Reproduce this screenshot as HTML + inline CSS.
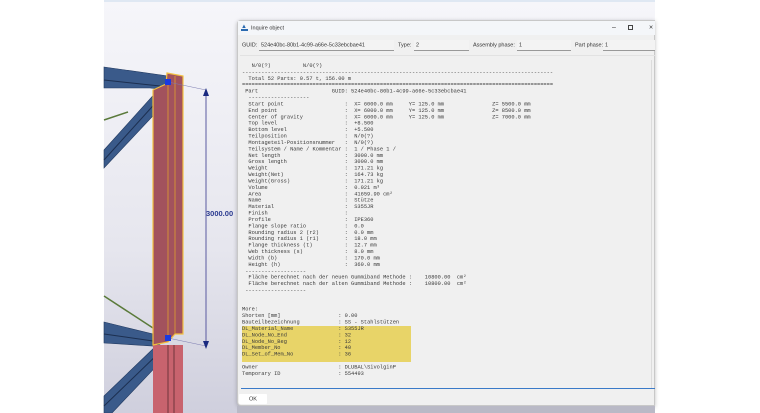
<!DOCTYPE html>
<html><head><meta charset="utf-8"><style>
*{margin:0;padding:0;box-sizing:border-box}
body{width:760px;height:413px;overflow:hidden;background:#fff;position:relative;font-family:"Liberation Sans",sans-serif}
.abs{position:absolute}
#txt{position:absolute;left:242px;top:63px;transform:scale(0.5);transform-origin:0 0;font-family:"Liberation Mono",monospace;font-size:10.7px;line-height:12.84px;color:#3a3a3a}
#txt div{position:relative;height:12.84px;width:860px}
#txt span{position:absolute;white-space:pre;top:0}
.s{transform:scale(0.5);transform-origin:0 0;white-space:nowrap;font-size:11px;color:#333}
</style></head><body>
<div class="abs" style="left:104px;top:0;width:551px;height:413px;background:linear-gradient(#f6f6fa,#e6e6ee 60%,#cfcfdd)"></div>
<div class="abs" style="left:104px;top:0;width:551px;height:2px;background:#dfe8f3"></div>
<svg class="abs" style="left:0;top:0" width="240" height="413">
<g fill="#3a5a8a" stroke="#223a60" stroke-width="0.6">
<polygon points="104,67 168,76 168,90 150,88 104,88"/>
<line x1="104" y1="80" x2="160" y2="86" stroke="#1c2f50" stroke-width="1"/>
<polygon points="104,150 158,90 166,94 166,102 104,168"/>
<line x1="104" y1="160" x2="160" y2="98" stroke="#1c2f50" stroke-width="1"/>
<polygon points="104,322 153,334 153,346 104,343"/>
<line x1="104" y1="334" x2="153" y2="341" stroke="#1c2f50" stroke-width="1"/>
<polygon points="104,396 158,344 166,348 166,356 112,413 104,413"/>
<line x1="104" y1="406" x2="162" y2="350" stroke="#1c2f50" stroke-width="1"/>
</g>
<line x1="104" y1="120" x2="128" y2="112" stroke="#5a7a3a" stroke-width="1.5"/>
<line x1="104" y1="296" x2="153" y2="328" stroke="#5a7a3a" stroke-width="1.5"/>
<rect x="153" y="345" width="30" height="68" fill="#c8636e"/>
<line x1="168" y1="345" x2="168" y2="413" stroke="#5a2a30" stroke-width="0.8"/>
<line x1="174" y1="345" x2="174" y2="413" stroke="#5a2a30" stroke-width="0.8"/>
<polygon points="153,90 166,84 167,73 183,76 183,334 175,334 168,342 153,345" fill="#a2525d" stroke="#f2c040" stroke-width="1.2"/>
<line x1="168" y1="84" x2="168" y2="342" stroke="#e0a030" stroke-width="0.8"/>
<line x1="175" y1="76" x2="175" y2="334" stroke="#e0a030" stroke-width="0.8"/>
<line x1="168" y1="82" x2="206" y2="90" stroke="#7a7ab0" stroke-width="0.5"/>
<line x1="168" y1="338" x2="206" y2="346" stroke="#7a7ab0" stroke-width="0.5"/>
<line x1="206" y1="92" x2="206" y2="345" stroke="#5a5aa0" stroke-width="1"/>
<polygon points="206,88 203,96 209,96" fill="#1a2a80"/>
<polygon points="206,349 203,341 209,341" fill="#1a2a80"/>
<rect x="165" y="79" width="6" height="6" fill="#1a3ae0"/>
<rect x="165" y="335" width="6" height="6" fill="#1a3ae0"/>
<text x="206" y="216" font-size="7.5" font-weight="bold" fill="#2a3a90" font-family="Liberation Sans">3000.00</text>
</svg>
<div class="abs" style="left:237px;top:20px;width:418px;height:386px;background:#f0f0f0;border:1px solid #c8c8c8;border-radius:4px 0 0 4px;box-shadow:0 1px 4px rgba(0,0,0,.25)"></div>
<div class="abs" style="left:238px;top:21px;width:417px;height:14px;background:#f4f6f9"></div>
<div class="abs" style="left:241px;top:25px;width:7px;height:6px;border-bottom:2px solid #2a6ab0;color:#2a6ab0;font-size:6px;line-height:4px">▲</div>
<div class="abs s" style="left:251px;top:25px">Inquire object</div>
<div class="abs s" style="left:612px;top:23px;font-size:14px">–</div>
<div class="abs" style="left:628px;top:25px;width:5px;height:5px;border:1px solid #444"></div>
<div class="abs s" style="left:649px;top:23px;font-size:14px">×</div>
<div class="abs s" style="left:242px;top:42px">GUID:</div>
<div class="abs" style="left:259px;top:40px;width:135px;height:11px;border-bottom:1px solid #999;background:#f3f3f3"></div>
<div class="abs s" style="left:261px;top:42px">524e40bc-80b1-4c99-a66e-5c33ebcbae41</div>
<div class="abs s" style="left:398px;top:42px">Type:</div>
<div class="abs" style="left:414px;top:40px;width:55px;height:11px;border-bottom:1px solid #999;background:#f3f3f3"></div>
<div class="abs s" style="left:416px;top:42px">2</div>
<div class="abs s" style="left:473px;top:42px">Assembly phase:</div>
<div class="abs" style="left:517px;top:40px;width:54px;height:11px;border-bottom:1px solid #999;background:#f3f3f3"></div>
<div class="abs s" style="left:519px;top:42px">1</div>
<div class="abs s" style="left:575px;top:42px">Part phase:</div>
<div class="abs" style="left:603px;top:40px;width:52px;height:11px;border-bottom:1px solid #999;background:#f3f3f3"></div>
<div class="abs s" style="left:605px;top:42px">1</div>
<div class="abs" style="left:240px;top:55px;width:415px;height:1px;background:#e2e2e2"></div>
<div class="abs" style="left:651px;top:60px;width:1px;height:328px;background:#dcdcdc"></div>
<div class="abs" style="left:242px;top:326px;width:169px;height:36px;background:#e8d468"></div>
<div class="abs" style="left:241px;top:388px;width:414px;height:1px;background:#3a7ac8"></div>
<div class="abs" style="left:239px;top:394px;width:28px;height:10px;background:#fff;border-radius:1px"></div>
<div class="abs s" style="left:249px;top:396px">OK</div>
<div class="abs" style="left:237px;top:406px;width:418px;height:7px;background:#b9b9c6"></div>
<div id="txt">
<div><span style="left:3ch">N/0(?)</span><span style="left:19ch">N/0(?)</span></div>
<div><span style="left:0">-------------------------------------------------------------------------------------------------</span></div>
<div><span style="left:2ch">Total 52 Parts: 0.57 t, 156.00 m</span></div>
<div><span style="left:0">=================================================================================================</span></div>
<div><span style="left:1ch">Part</span><span style="left:28ch">GUID: 524e40bc-80b1-4c99-a66e-5c33ebcbae41</span></div>
<div><span style="left:2ch">-------------------</span></div>
<div><span style="left:2ch">Start point</span><span style="left:32ch">:  X= 6000.0 mm</span><span style="left:52ch">Y= 125.0 mm</span><span style="left:78ch">Z= 5500.0 mm</span></div>
<div><span style="left:2ch">End point</span><span style="left:32ch">:  X= 6000.0 mm</span><span style="left:52ch">Y= 125.0 mm</span><span style="left:78ch">Z= 8500.0 mm</span></div>
<div><span style="left:2ch">Center of gravity</span><span style="left:32ch">:  X= 6000.0 mm</span><span style="left:52ch">Y= 125.0 mm</span><span style="left:78ch">Z= 7000.0 mm</span></div>
<div><span style="left:2ch">Top level</span><span style="left:32ch">:  +8.500</span></div>
<div><span style="left:2ch">Bottom level</span><span style="left:32ch">:  +5.500</span></div>
<div><span style="left:2ch">Teilposition</span><span style="left:32ch">:  N/0(?)</span></div>
<div><span style="left:2ch">Montageteil-Positionsnummer</span><span style="left:32ch">:  N/0(?)</span></div>
<div><span style="left:2ch">Teilsystem / Name / Kommentar</span><span style="left:32ch">:  1 / Phase 1 /</span></div>
<div><span style="left:2ch">Net length</span><span style="left:32ch">:  3000.0 mm</span></div>
<div><span style="left:2ch">Gross length</span><span style="left:32ch">:  3000.0 mm</span></div>
<div><span style="left:2ch">Weight</span><span style="left:32ch">:  171.21 kg</span></div>
<div><span style="left:2ch">Weight(Net)</span><span style="left:32ch">:  164.73 kg</span></div>
<div><span style="left:2ch">Weight(Gross)</span><span style="left:32ch">:  171.21 kg</span></div>
<div><span style="left:2ch">Volume</span><span style="left:32ch">:  0.021 m³</span></div>
<div><span style="left:2ch">Area</span><span style="left:32ch">:  41659.90 cm²</span></div>
<div><span style="left:2ch">Name</span><span style="left:32ch">:  Stütze</span></div>
<div><span style="left:2ch">Material</span><span style="left:32ch">:  S355JR</span></div>
<div><span style="left:2ch">Finish</span><span style="left:32ch">:</span></div>
<div><span style="left:2ch">Profile</span><span style="left:32ch">:  IPE360</span></div>
<div><span style="left:2ch">Flange slope ratio</span><span style="left:32ch">:  0.0</span></div>
<div><span style="left:2ch">Rounding radius 2 (r2)</span><span style="left:32ch">:  0.0 mm</span></div>
<div><span style="left:2ch">Rounding radius 1 (r1)</span><span style="left:32ch">:  18.0 mm</span></div>
<div><span style="left:2ch">Flange thickness (t)</span><span style="left:32ch">:  12.7 mm</span></div>
<div><span style="left:2ch">Web thickness (s)</span><span style="left:32ch">:  8.0 mm</span></div>
<div><span style="left:2ch">Width (b)</span><span style="left:32ch">:  170.0 mm</span></div>
<div><span style="left:2ch">Height (h)</span><span style="left:32ch">:  360.0 mm</span></div>
<div><span style="left:1ch">-------------------</span></div>
<div><span style="left:2ch">Fläche berechnet nach der neuen Gummiband Methode :</span><span style="left:57ch">10800.00</span><span style="left:67ch">cm²</span></div>
<div><span style="left:2ch">Fläche berechnet nach der alten Gummiband Methode :</span><span style="left:57ch">10800.00</span><span style="left:67ch">cm²</span></div>
<div><span style="left:1ch">-------------------</span></div>
<div></div>
<div></div>
<div><span style="left:0">More:</span></div>
<div><span style="left:0">Shorten [mm]</span><span style="left:30ch">: 0.00</span></div>
<div><span style="left:0">Bauteilbezeichnung</span><span style="left:30ch">: SS - Stahlstützen</span></div>
<div><span style="left:0">DL_Material_Name</span><span style="left:30ch">: S355JR</span></div>
<div><span style="left:0">DL_Node_No_End</span><span style="left:30ch">: 32</span></div>
<div><span style="left:0">DL_Node_No_Beg</span><span style="left:30ch">: 12</span></div>
<div><span style="left:0">DL_Member_No</span><span style="left:30ch">: 40</span></div>
<div><span style="left:0">DL_Set_of_Mem_No</span><span style="left:30ch">: 36</span></div>
<div></div>
<div><span style="left:0">Owner</span><span style="left:30ch">: DLUBAL\SivolginP</span></div>
<div><span style="left:0">Temporary ID</span><span style="left:30ch">: 554493</span></div>
</div>
</body></html>
